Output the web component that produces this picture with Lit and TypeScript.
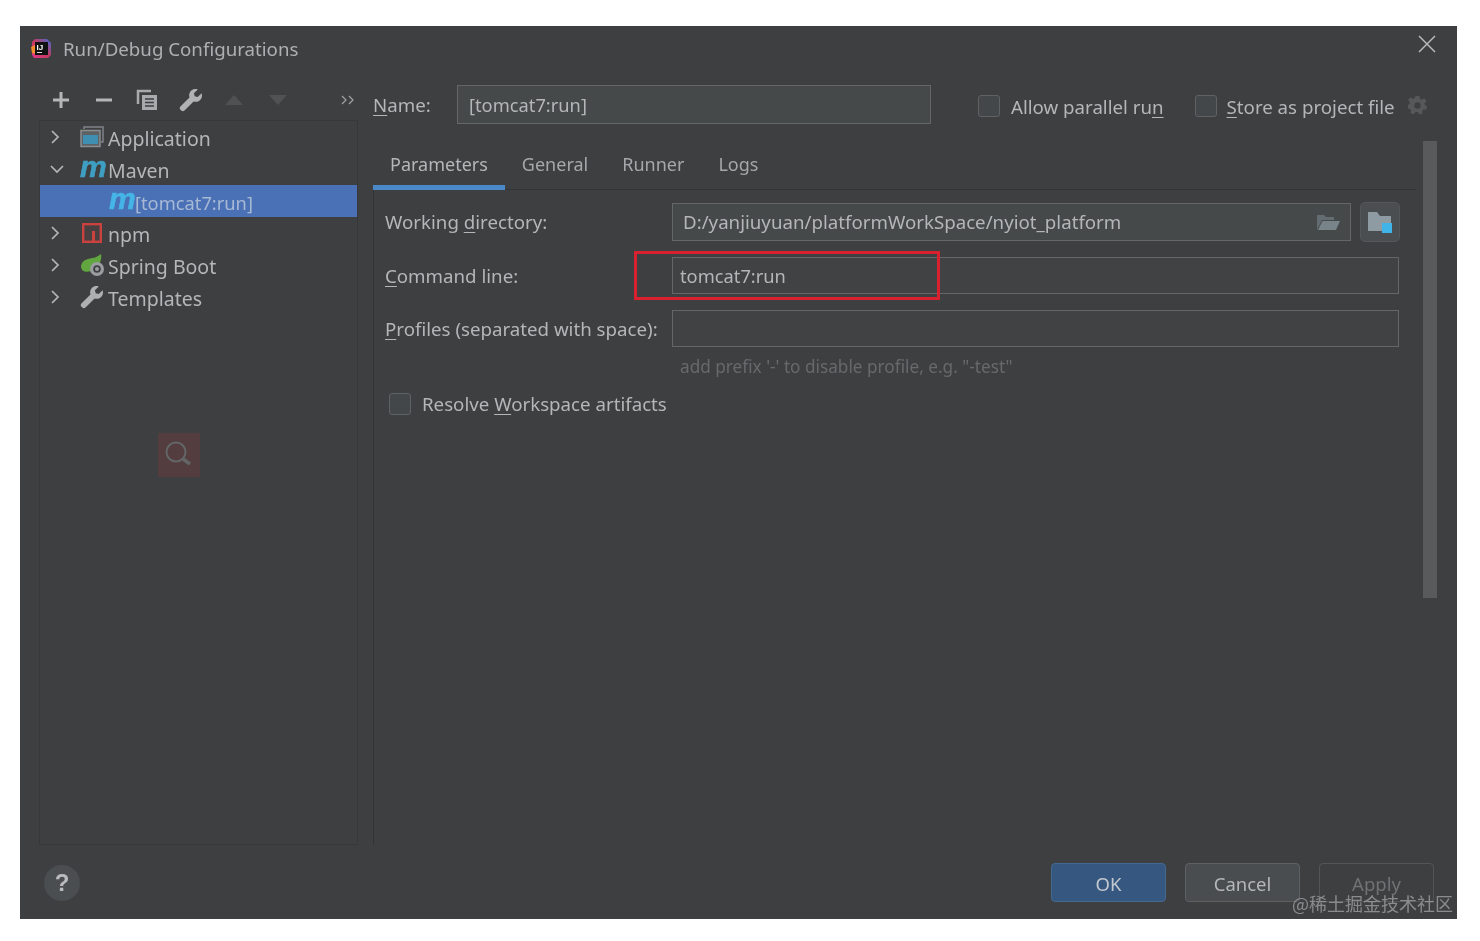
import { LitElement, html, css } from "lit";
import { customElement } from "lit/decorators.js";

const chevR = html`<svg class="chev" width="12" height="16" viewBox="0 0 12 16"><path d="M3 2l6 6-6 6" fill="none" stroke="#b4b6b8" stroke-width="1.7"/></svg>`;
const chevD = html`<svg class="chev" width="16" height="12" viewBox="0 0 16 12"><path d="M2 3l6 6 6-6" fill="none" stroke="#b4b6b8" stroke-width="1.7"/></svg>`;
const wrench = (c: string, s = 24) => html`<svg width=${s} height=${s} viewBox="0 0 24 24"><path fill=${c} d="M22.6 5.2l-3.9 3.9-3-.8-.8-3 3.9-3.9c-2.3-.9-5-.4-6.8 1.400-1.800 1.800-2.300 4.400-1.500 6.600L1.400 18.500c-.9.900-.9 2.300 0 3.200l.9.900c.9.900 2.300.900 3.200 0l9.100-9.100c2.200.8 4.800.3 6.600-1.500 1.800-1.800 2.300-4.500 1.400-6.800z"/></svg>`;

@customElement("app-root")
export class AppRoot extends LitElement {
  static styles = css`
    :host { display: block; background: #fff; height: 941px; padding: 26px 23px 22px 20px; box-sizing: border-box; font-family: "Noto Sans", "Noto Sans CJK SC", sans-serif; font-size: 18.7px; color: #b4b6b8; }
    * { box-sizing: border-box; }
    svg { display: block; flex: none; }
    u { text-underline-offset: 3px; text-decoration-thickness: 1px; }
    .dialog { position: relative; height: 893px; background: #3e3f41; display: flex; flex-direction: column; filter: blur(0.35px); }
    .title { height: 59px; display: flex; align-items: flex-start; padding: 10px 21px 0 11px; font-size: 18.7px; color: #aeb0b2; }
    .title .logo { margin-right: 11px; margin-top: 2px; }
    .title .name { flex: 1; line-height: 25px; }
    .title .close { margin-top: -1px; }
    .body { flex: 1; min-height: 0; display: flex; }
    .left { width: 353px; padding-left: 19px; display: flex; flex-direction: column; }
    .tools { height: 35px; width: 319px; display: flex; align-items: center; padding: 0 3px 6px 0; }
    .tool { width: 43.400px; display: flex; justify-content: center; }
    .more { margin-left: auto; color: #9a9c9e; }
    .tree { position: relative; flex: 1; width: 319px; border: 1px solid #37383a; }
    .row { height: 32px; display: flex; align-items: center; color: #b4b6b8; line-height: 28px; font-size: 19.500px; }
    .row .c { width: 40px; padding-left: 9px; display: flex; align-items: center; }
    .row .i { width: 28px; display: flex; align-items: center; }
    .row .t { padding-top: 4px; }
    .row.sel { background: #4a70b5; color: #a8b9d6; font-size: 18.300px; padding-left: 69px; }
    .m { font-family: "Liberation Sans", sans-serif; font-style: italic; font-weight: 700; font-size: 30px; line-height: 28px; color: #3f9fc2; width: 28px; display: block; margin-top: -5px; letter-spacing: -1px; -webkit-text-stroke: 0.6px currentColor; }
    .sel .m { color: #45b4e6; width: 26px; }
    .npm { margin-left: 2px; }
    .search { position: absolute; left: 118px; top: 312px; width: 42px; height: 44px; background: #533d3f; display: flex; align-items: center; justify-content: center; }
    .right { flex: 1; min-width: 0; display: flex; flex-direction: column; }
    .head { height: 39px; display: flex; align-items: center; }
    .head .lab { width: 84px; }
    .input { background: #45494a; border: 1px solid #646667; display: flex; align-items: center; color: #b4b6b8; }
    .input.plain { background: #404244; }
    .name-in { width: 474px; height: 39px; padding-left: 11px; font-size: 18.300px; }
    .cb { width: 22px; height: 22px; border: 1.500px solid #5e6263; border-radius: 3px; background: #43474a; flex: none; }
    .chk { display: flex; align-items: center; }
    .head .chk { margin-top: 3px; }
    .head .a { margin-left: 47px; gap: 11px; }
    .head .b { margin-left: 31px; gap: 10px; }
    .gear { margin: 2px 0 0 13px; }
    .lower { flex: 1; min-height: 0; margin-top: 17px; display: flex; }
    .main { width: 1043px; display: flex; flex-direction: column; }
    .scroll { width: 14px; height: 457px; margin-left: 7px; background: #585a5c; }
    .tabs { height: 49px; flex: none; display: flex; border-bottom: 1px solid #323335; font-size: 18px; }
    .tab { height: 49px; padding: 10px 17px 0; color: #a5a7a9; line-height: 26px; }
    .tab.on { border-bottom: 5px solid #4a88c7; color: #b4b6b8; }
    .content { flex: 1; border-left: 1px solid #323335; padding: 12px 17px 0 11px; }
    .form { display: grid; grid-template-columns: 287px 1fr; grid-template-rows: 39px 37px 37px; row-gap: 16px; align-items: center; }
    .field { position: relative; display: flex; align-items: center; height: 100%; }
    .field .input { flex: 1; height: 100%; padding-left: 7px; font-size: 18.300px; }
    .wd .input { padding-left: 10px; height: 38px; justify-content: space-between; padding-right: 10px; font-size: 18.700px; }
    .browse { width: 40px; height: 40px; margin: 0 -1px 0 9px; background: #4a4e50; border: 1px solid #55585a; border-radius: 5px; display: flex; align-items: center; justify-content: center; }
    .redbox { position: absolute; left: -38px; top: -6px; width: 306px; height: 49px; border: 3px solid #d8202e; }
    .hint { margin: 7px 0 0 295px; color: #68696b; font-size: 17.200px; line-height: 26px; }
    .resolve { margin: 11px 0 0 4px; gap: 11px; }
    .foot { height: 74px; flex: none; display: flex; padding: 18px 23px 0 24px; }
    .help { width: 36px; height: 36px; border-radius: 50%; background: #4a4e50; color: #b9bbbd; font-weight: 700; font-size: 24px; display: flex; align-items: center; justify-content: center; font-family: "Liberation Sans", sans-serif; margin-top: 2px; }
    .btns { margin-left: auto; display: flex; gap: 19px; }
    .btn { width: 115px; height: 39px; border-radius: 4px; border: 1.500px solid #5e6162; background: #494d4f; display: flex; align-items: center; justify-content: center; color: #b4b6b8; font-size: 18.500px; padding-top: 2px; }
    .btn.ok { background: #365880; border-color: #43688f; color: #c2c8cf; }
    .btn.off { background: transparent; border-color: #535557; color: #707274; }
    .water { position: absolute; right: 4px; bottom: 4px; color: #a4a5a6; opacity: 0.75; font-family: "Noto Sans CJK SC", sans-serif; font-size: 18px; line-height: 24px; white-space: nowrap; }
  `;

  render() {
    return html`<div class="dialog">
      <div class="title">
        <svg class="logo" width="21" height="21" viewBox="0 0 21 21">
          <defs><linearGradient id="lg" x1="0" y1="1" x2="1" y2="0"><stop offset="0" stop-color="#e0368c"/><stop offset=".5" stop-color="#c43a5e"/><stop offset="1" stop-color="#3b6fd8"/></linearGradient></defs>
          <path fill="url(#lg)" d="M4 1h12l4 4v12l-3 3H3l-2-3V4z"/>
          <path fill="#f28b2c" d="M0 9l4-2v9l-3-1z"/>
          <rect x="4" y="4" width="13" height="13" fill="#111"/>
          <text x="5.500" y="11.500" font-size="8" font-weight="700" fill="#fff" font-family="Liberation Sans">IJ</text>
          <rect x="6" y="14" width="5" height="1" fill="#ddd"/>
        </svg>
        <div class="name">Run/Debug Configurations</div>
        <svg class="close" width="18" height="18" viewBox="0 0 18 18"><path d="M1 1l16 16M17 1L1 17" stroke="#b9babb" stroke-width="1.500"/></svg>
      </div>
      <div class="body">
        <div class="left">
          <div class="tools">
            <div class="tool"><svg width="18" height="18" viewBox="0 0 18 18"><path d="M9 1v16M1 9h16" stroke="#b4b6b8" stroke-width="3"/></svg></div>
            <div class="tool"><svg width="18" height="18" viewBox="0 0 18 18"><path d="M1 9h16" stroke="#b4b6b8" stroke-width="3"/></svg></div>
            <div class="tool"><svg width="22" height="22" viewBox="0 0 22 22"><path d="M2 15V2h13" fill="none" stroke="#a8aaac" stroke-width="2.500"/><path fill="#a8aaac" d="M6 6h15v15H6z"/><path d="M9 10h9M9 13.500h9M9 17h9" stroke="#3e3f41" stroke-width="1.500"/></svg></div>
            <div class="tool">${wrench("#b0b2b4")}</div>
            <div class="tool"><svg width="20" height="10" viewBox="0 0 20 10"><path d="M10 0l9 10H1z" fill="#4f5153"/></svg></div>
            <div class="tool"><svg width="20" height="10" viewBox="0 0 20 10"><path d="M10 10L1 0h18z" fill="#505254"/></svg></div>
            <div class="more"><svg width="14" height="10" viewBox="0 0 14 10"><path d="M1 1l4 4-4 4M8 1l4 4-4 4" fill="none" stroke="#a0a2a4" stroke-width="1.200"/></svg></div>
          </div>
          <div class="tree">
            <div class="row"><span class="c">${chevR}</span><span class="i"><svg width="24" height="22" viewBox="0 0 24 22"><path d="M4 3V1h19v15h-2" fill="none" stroke="#7f8386" stroke-width="1.500"/><rect x="1" y="4.500" width="19" height="16" fill="#5d6164" stroke="#8a8e91" stroke-width="1.500"/><rect x="3" y="9" width="15" height="9" fill="#3f8fb2"/></svg></span><span class="t">Application</span></div>
            <div class="row"><span class="c">${chevD}</span><span class="i"><span class="m">m</span></span><span class="t">Maven</span></div>
            <div class="row sel"><span class="m">m</span><span class="t">[tomcat7:run]</span></div>
            <div class="row"><span class="c">${chevR}</span><span class="i"><svg class="npm" width="20" height="20" viewBox="0 0 20 20"><rect x="1.200" y="1.200" width="17.600" height="17.600" fill="#473f40" stroke="#c9423f" stroke-width="2.400"/><path d="M11.500 8v10" fill="none" stroke="#c9423f" stroke-width="3"/></svg></span><span class="t">npm</span></div>
            <div class="row"><span class="c">${chevR}</span><span class="i"><svg width="25" height="24" viewBox="0 0 25 24"><path fill="#62a63f" d="M1 14C1 7 8 6 12 5c3 0 6-2 9-4 1 5-1 10-4 12l-6 5c-3 1-9 2-10-4z"/><circle cx="17" cy="16" r="7" fill="#9a9d9f"/><circle cx="17" cy="16" r="3.800" fill="#3e3f41"/><circle cx="17" cy="16" r="2" fill="#9a9d9f"/></svg></span><span class="t">Spring Boot</span></div>
            <div class="row"><span class="c">${chevR}</span><span class="i">${wrench("#aeb0b2")}</span><span class="t">Templates</span></div>
            <div class="search"><svg width="32" height="32" viewBox="0 0 32 32"><circle cx="13" cy="13" r="9.500" fill="none" stroke="#636566" stroke-width="2"/><path d="M20 20l7 5" stroke="#636566" stroke-width="3.500"/></svg></div>
          </div>
        </div>
        <div class="right">
          <div class="head">
            <span class="lab"><u>N</u>ame:</span>
            <div class="input name-in">[tomcat7:run]</div>
            <div class="chk a"><span class="cb"></span><span>Allow parallel ru<u>n</u></span></div>
            <div class="chk b"><span class="cb"></span><span><u>S</u>tore as project file</span></div>
            <svg class="gear" width="20" height="22" viewBox="0 0 22 24"><path fill="#565859" fill-rule="evenodd" d="M8.500 1h4l.6 3 2.200 1 2.600-1.600 2.500 3.200-2.200 2 .3 2.400 2.500 1.200-1 3.900-2.800-.4-1.700 1.800.5 2.900-3.800.8-1.200-2.700h-2.500L6.300 21l-3.700-1.200.7-2.900-1.600-1.800L-.2 15l-.8-4 2.700-1 .3-2.400L0 5.500l2.600-3 2.500 1.700 2.300-1zM10.500 8a3.500 3.500 0 100 7 3.500 3.500 0 000-7z"/></svg>
          </div>
          <div class="lower">
            <div class="main">
              <div class="tabs">
                <div class="tab on">Parameters</div>
                <div class="tab">General</div>
                <div class="tab">Runner</div>
                <div class="tab">Logs</div>
              </div>
              <div class="content">
                <div class="form">
                  <div>Working <u>d</u>irectory:</div>
                  <div class="field wd">
                    <div class="input">D:/yanjiuyuan/platformWorkSpace/nyiot_platform
                      <svg width="24" height="18" viewBox="0 0 24 18"><path fill="#626c71" d="M1 17V2h7l2 2h8v3H6z"/><path fill="#78848a" d="M6.500 8H24l-4 9H2z"/></svg>
                    </div>
                    <div class="browse"><svg width="26" height="26" viewBox="0 0 26 26"><path fill="#8f9ba3" d="M1 3h9l3 4h11v15H1z"/><rect x="15" y="14" width="10" height="10" fill="#3fb4e8"/></svg></div>
                  </div>
                  <div><u>C</u>ommand line:</div>
                  <div class="field"><div class="input plain">tomcat7:run</div><div class="redbox"></div></div>
                  <div><u>P</u>rofiles (separated with space):</div>
                  <div class="field"><div class="input plain"></div></div>
                </div>
                <div class="hint">add prefix '-' to disable profile, e.g. "-test"</div>
                <div class="chk resolve"><span class="cb"></span><span>Resolve <u>W</u>orkspace artifacts</span></div>
              </div>
            </div>
            <div class="scroll"></div>
          </div>
        </div>
      </div>
      <div class="foot">
        <div class="help">?</div>
        <div class="btns">
          <div class="btn ok">OK</div>
          <div class="btn">Cancel</div>
          <div class="btn off">Apply</div>
        </div>
      </div>
      <div class="water">@稀土掘金技术社区</div>
    </div>`;
  }
}
